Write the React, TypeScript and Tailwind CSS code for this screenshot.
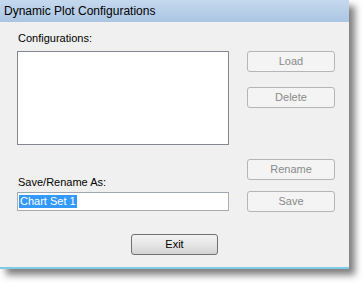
import React from "react";

const DisabledButton = ({ label, className = "" }: { label: string; className?: string }) => (
  <div
    className={`w-[88px] h-[21px] flex items-center justify-center rounded-[3px] border border-[#b5b5b5] bg-[#f4f4f4] text-[#8a8a8a] text-[11px] ${className}`}
  >
    {label}
  </div>
);

const App = () => {
  return (
    <div className="w-[363px] h-[284px] bg-white" style={{ fontFamily: '"Liberation Sans", Arial, sans-serif' }}>
      <div className="w-[349px] h-[269px] flex flex-col bg-[#f0f0f0] shadow-[6px_6px_7px_rgba(0,0,0,0.5)]">
        {/* title bar */}
        <div className="h-[22px] flex items-center pl-[4px] bg-gradient-to-b from-[#c5d9ee] to-[#aac5e3] text-[12px] text-black">
          Dynamic Plot Configurations
        </div>

        <div className="flex-1 flex flex-col border-b-2 border-[#7fcbe6]">
          <div className="flex pl-[17px] pt-[9px] gap-[18px]">
            {/* left column */}
            <div className="w-[212px] flex flex-col">
              <div className="h-[14px] leading-[14px] text-[11px] pl-[1px] text-black">Configurations:</div>
              <div className="mt-[6px] h-[94px] bg-white border border-[#828790]" />
              <div className="mt-[30px] h-[14px] leading-[14px] text-[11px] pl-[1px] text-black">Save/Rename As:</div>
              <div className="mt-[3px] h-[19px] bg-white border border-[#abadb3] border-t-[#9fa7b4] flex items-center pl-[1px]">
                <span className="bg-[#3399ff] text-white text-[11px] leading-[13px] px-px">Chart Set 1</span>
              </div>
            </div>

            {/* right column */}
            <div className="flex flex-col pt-[20px]">
              <DisabledButton label="Load" />
              <DisabledButton label="Delete" className="mt-[15px]" />
              <DisabledButton label="Rename" className="mt-[51px]" />
              <DisabledButton label="Save" className="mt-[11px]" />
            </div>
          </div>

          <div className="flex justify-center mt-[22px]">
            <div className="w-[87px] h-[21px] flex items-center justify-center rounded-[3px] border border-[#707070] bg-gradient-to-b from-[#f2f2f2] via-[#e6e6e6] to-[#d3d3d3] text-[11px] text-black">
              Exit
            </div>
          </div>
        </div>
      </div>
    </div>
  );
};

export default App;
